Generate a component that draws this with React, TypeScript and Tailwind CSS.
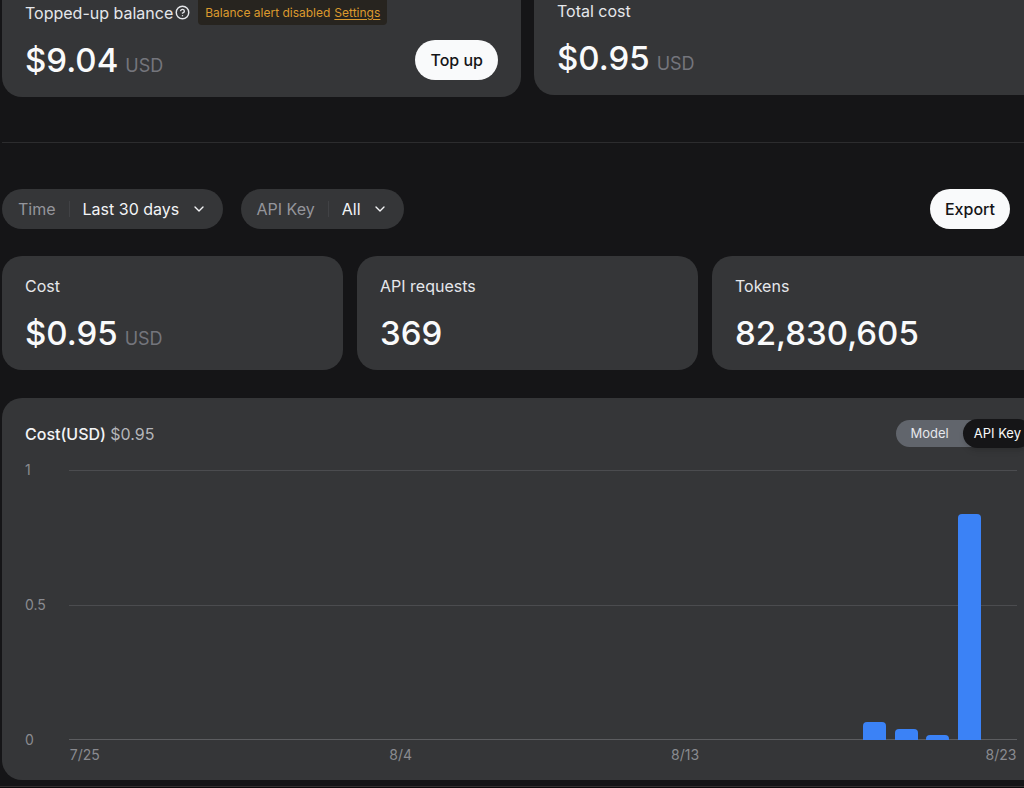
import type { ReactNode } from "react";
import { ChevronDown, CircleHelp } from "lucide-react";

const SLOTS = 30;
const DAILY_COST: Record<number, number> = { 25: 18, 26: 11, 27: 5, 28: 226 };
const DATES: Record<number, string> = { 0: "7/25", 10: "8/4", 19: "8/13", 29: "8/23" };
const slots = Array.from({ length: SLOTS }, (_, i) => i);

function Amount({ value, unit }: { value: string; unit?: string }) {
  return (
    <p className="flex items-baseline gap-[7px] text-[33px] leading-10 font-medium text-[#f9fafb]">
      {value}
      {unit && <span className="text-lg leading-6 font-normal text-[#74757c]">{unit}</span>}
    </p>
  );
}

function Stat({ label, value, unit }: { label: string; value: string; unit?: string }) {
  return (
    <article className="rounded-[20px] bg-[#353638] px-[23px] pt-[18px] pb-[17px]">
      <h2 className="text-base leading-6">{label}</h2>
      <div className="mt-[15px]">
        <Amount value={value} unit={unit} />
      </div>
    </article>
  );
}

function Filter({ id, label, value }: { id: string; label: string; value: string }) {
  return (
    <div className="flex h-10 items-center rounded-full bg-[#353638] px-4">
      <label htmlFor={id} className="text-[#94959b]">
        {label}
      </label>
      <span className="mx-[13px] h-4 w-px bg-[#414245]" />
      <div className="grid items-center">
        <select
          id={id}
          className="col-start-1 row-start-1 cursor-pointer appearance-none bg-transparent pr-[27px] text-[#f3f4f6] outline-none"
        >
          <option>{value}</option>
        </select>
        <ChevronDown
          className="pointer-events-none col-start-1 row-start-1 justify-self-end text-[#f3f4f6]"
          size={16}
          strokeWidth={2}
        />
      </div>
    </div>
  );
}

function PillButton({ children }: { children: ReactNode }) {
  return (
    <button type="button" className="h-10 rounded-full bg-[#f9fafb] px-[15px] font-medium text-[#151517]">
      {children}
    </button>
  );
}

function CostChart() {
  return (
    <div className="mt-[23px] mr-[13px] grid grid-cols-[44px_1fr] text-sm text-[#8a8b90]">
      <div className="flex h-[270px] flex-col justify-between">
        <span className="-my-[10px] leading-5">1</span>
        <span className="-my-[10px] leading-5">0.5</span>
        <span className="-my-[10px] leading-5">0</span>
      </div>
      <div className="grid">
        <div className="col-start-1 row-start-1 grid grid-rows-2 border-b border-[#5c5d60]">
          <div className="border-t border-[#4b4c4f]" />
          <div className="border-t border-[#4b4c4f]" />
        </div>
        <div className="col-start-1 row-start-1 flex h-[270px] items-end">
          {slots.map((i) => (
            <div key={i} className="flex flex-1 justify-center">
              {DAILY_COST[i] && (
                <div className="w-[23px] rounded-t bg-[#3b82f6]" style={{ height: DAILY_COST[i] }} />
              )}
            </div>
          ))}
        </div>
      </div>
      <div className="col-start-2 flex pt-[5px]">
        {slots.map((i) => (
          <div key={i} className="flex w-0 flex-1 justify-center leading-5 whitespace-nowrap">
            {DATES[i]}
          </div>
        ))}
      </div>
    </div>
  );
}

export default function App() {
  return (
    <div className="min-h-screen overflow-hidden bg-[#151517] font-['Inter',sans-serif] text-base text-[#e5e7eb]">
      <main className="mr-[-29px] ml-[2px]">
        <section className="grid grid-cols-2 items-start gap-[13px]">
          <article className="rounded-b-[20px] bg-[#353638] px-[23px] pb-[17px]">
            <div className="flex h-[25px] items-center">
              <h2>Topped-up balance</h2>
              <CircleHelp className="ml-0.5" size={15} strokeWidth={2.3} />
              <p className="ml-2 flex h-full items-center gap-1 rounded-b bg-[#27241f] px-[7px] text-xs text-[#dc9a2e]">
                Balance alert disabled
                <a href="#settings" className="underline underline-offset-2">
                  Settings
                </a>
              </p>
            </div>
            <div className="mt-[15px] flex items-center justify-between">
              <Amount value="$9.04" unit="USD" />
              <PillButton>Top up</PillButton>
            </div>
          </article>
          <article className="rounded-b-[20px] bg-[#353638] px-[23px] pb-[17px]">
            <h2 className="leading-[23px]">Total cost</h2>
            <div className="mt-[15px]">
              <Amount value="$0.95" unit="USD" />
            </div>
          </article>
        </section>

        <hr className="mt-[45px] border-[#2c2c2e]" />

        <section className="mt-[46px] mr-[43px] flex items-center gap-[18px]">
          <Filter id="time" label="Time" value="Last 30 days" />
          <Filter id="api-key" label="API Key" value="All" />
          <div className="ml-auto">
            <PillButton>Export</PillButton>
          </div>
        </section>

        <section className="mt-[27px] grid grid-cols-3 gap-[14px]">
          <Stat label="Cost" value="$0.95" unit="USD" />
          <Stat label="API requests" value="369" />
          <Stat label="Tokens" value="82,830,605" />
        </section>

        <section className="mt-7 rounded-[20px] bg-[#353638] px-[23px] pt-[22px] pb-[15px]">
          <div className="-mr-0.5 flex items-center justify-between">
            <h2 className="font-medium text-[#f3f4f6]">
              Cost(USD) <span className="font-normal text-[#b4b5ba]">$0.95</span>
            </h2>
            <div className="flex h-[27px] items-center rounded-full bg-[#61656c] text-[13px]">
              <button type="button" aria-pressed="false" className="px-[14px]">
                Model
              </button>
              <button
                type="button"
                aria-pressed="true"
                className="h-[29px] rounded-full bg-[#151517] px-[11px] text-[#f9fafb] shadow-md"
              >
                API Key
              </button>
            </div>
          </div>
          <CostChart />
        </section>
      </main>
      <footer className="mt-[6px] h-2 border-t border-[#333031] bg-[#0c0c0d]" />
    </div>
  );
}
